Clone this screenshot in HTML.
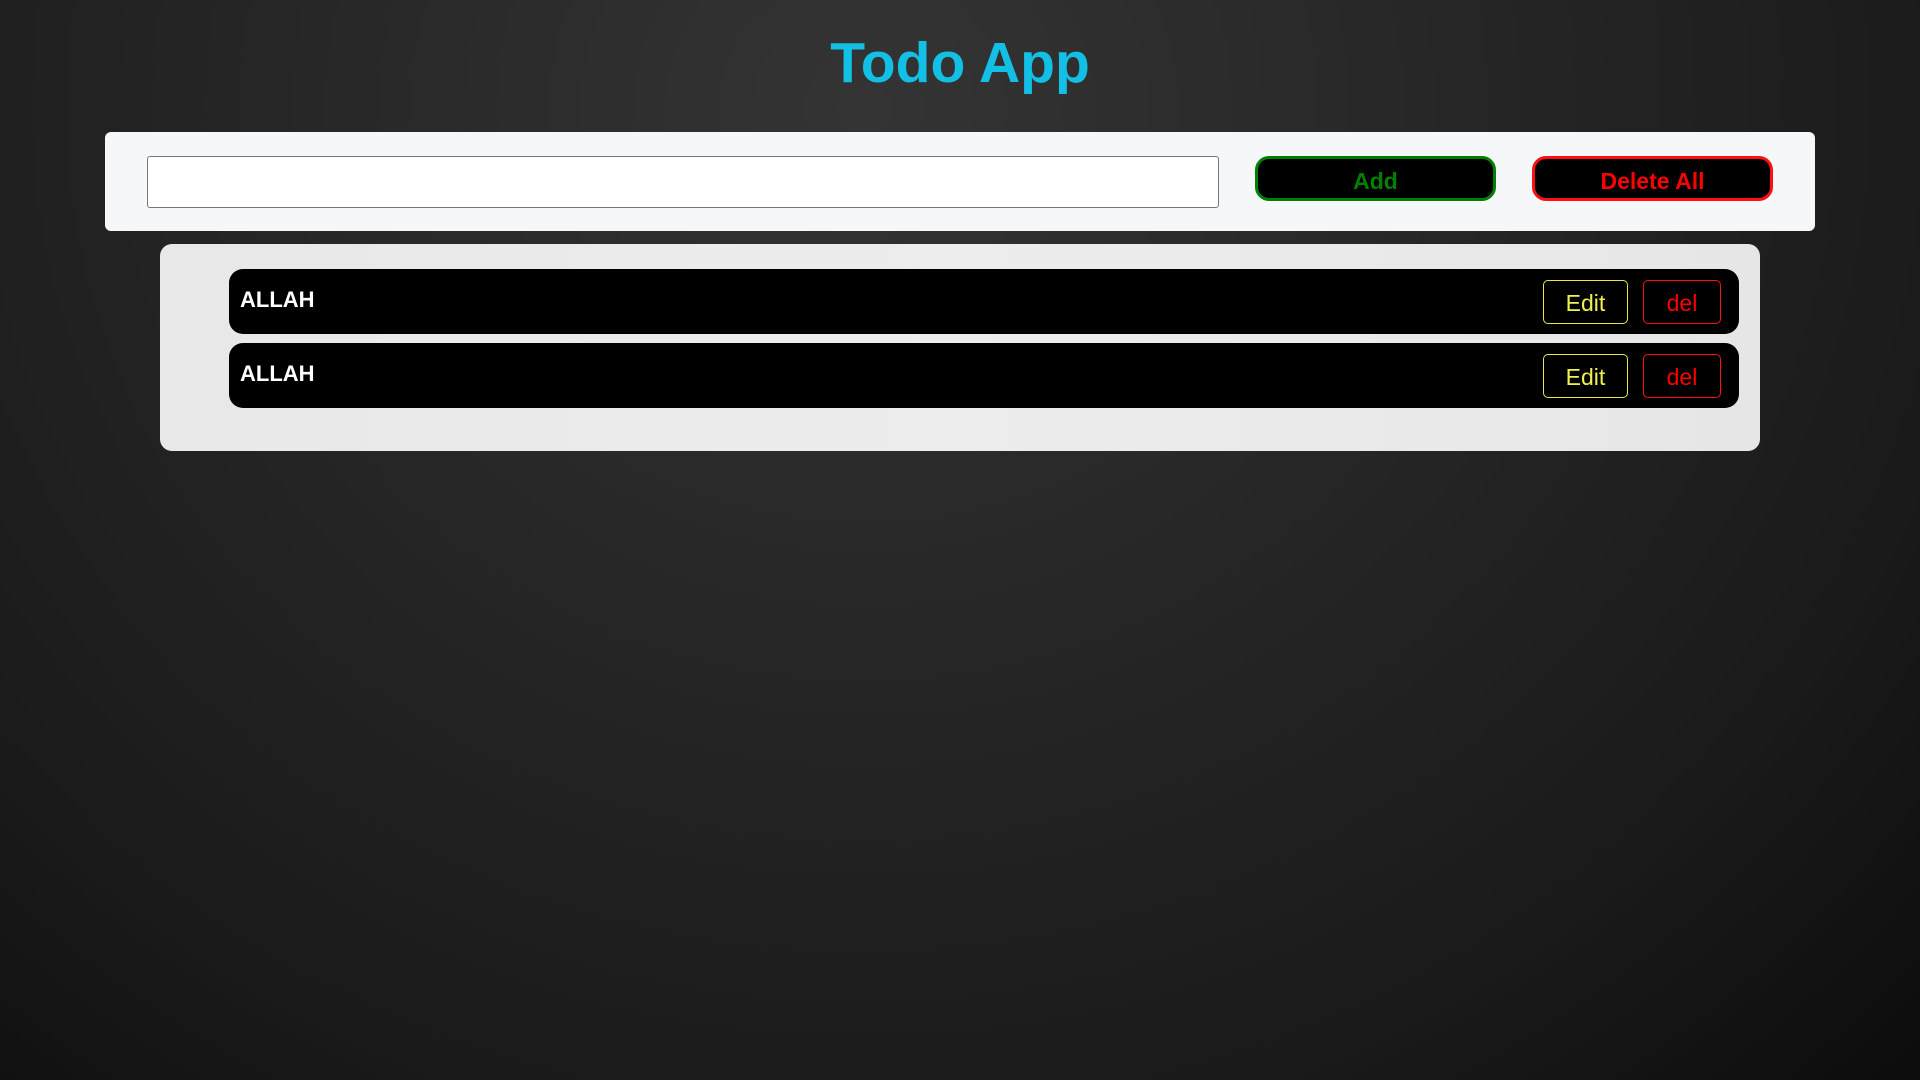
<!DOCTYPE html>
<html><head><meta charset="utf-8"><style>
*{box-sizing:border-box;margin:0;padding:0}
body{width:1920px;height:1080px;overflow:hidden;font-family:"Liberation Sans",sans-serif;
background:radial-gradient(ellipse at 45% 10%,#343434 0%,#262626 40%,#1a1a1a 75%,#0c0c0c 100%);position:relative}
h1{position:absolute;left:0;width:1920px;top:30px;text-align:center;color:#12c0e6;font-size:57px;font-weight:bold}
.top{position:absolute;left:105px;top:132px;width:1710px;height:99px;background:#f6f7f9;border-radius:6px}
.inp{position:absolute;left:147px;top:156px;width:1072px;height:52px;background:#fff;border:1px solid #777;border-radius:3px}
.btn{position:absolute;top:156px;height:45px;width:241px;background:#000;border-radius:14px;font-weight:bold;font-size:23px;text-align:center;line-height:45px}
.add{left:1255px;border:3px solid #008000;color:#008000}
.dela{left:1532px;border:3px solid #ff1010;color:#ff0000}
.list{position:absolute;left:160px;top:244px;width:1600px;height:207px;background:linear-gradient(90deg,#e8e8e8,#ededed 50%,#e6e6e6);border-radius:12px}
.item{position:absolute;left:229px;width:1510px;height:65px;background:#000;border-radius:14px}
.item span{position:absolute;left:11px;top:18px;color:#fff;font-weight:bold;font-size:22px}
.e,.d{position:absolute;top:11px;height:44px;border-radius:5px;font-size:23px;text-align:center;line-height:44px}
.e{left:1314px;width:85px;border:1px solid #e8e84a;color:#f0f050}
.d{left:1414px;width:78px;border:1px solid #ff1010;color:#ff0000}
</style></head><body>
<h1>Todo App</h1>
<div class="top"></div>
<div class="inp"></div>
<div class="btn add">Add</div>
<div class="btn dela">Delete All</div>
<div class="list"></div>
<div class="item" style="top:269px"><span>ALLAH</span><div class="e">Edit</div><div class="d">del</div></div>
<div class="item" style="top:343px"><span>ALLAH</span><div class="e">Edit</div><div class="d">del</div></div>
</body></html>
